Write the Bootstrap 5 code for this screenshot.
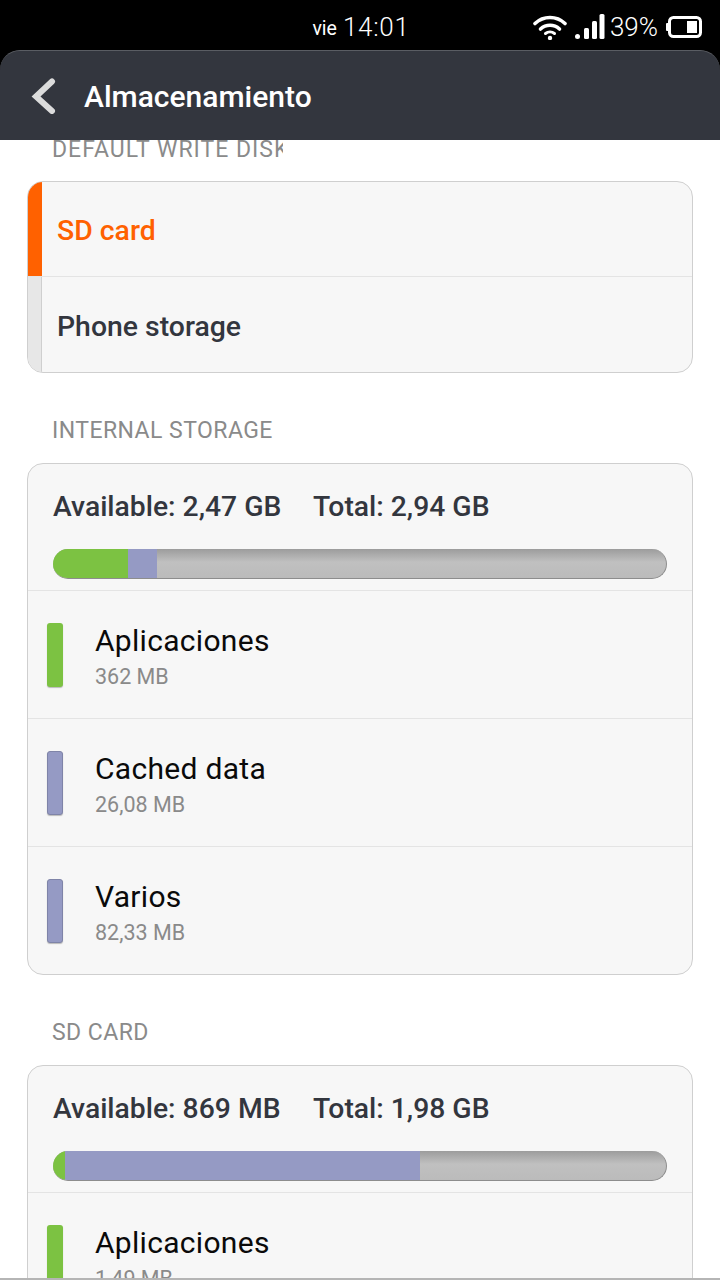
<!DOCTYPE html>
<html>

<head>
    <title>Almacenamiento</title>
    <!-- Bootstrap CSS -->
    <link rel="stylesheet" href="https://cdn.jsdelivr.net/npm/bootstrap@5.3.0/dist/css/bootstrap.min.css">
    <style>
        html, body { margin: 0; height: 1280px; overflow: hidden; background: #000; font-family: Roboto, "Liberation Sans", sans-serif; }
        .phone { width: 720px; height: 1280px; overflow: hidden; }
        .status-bar { height: 50px; padding: 4px 18px 0 0; color: #fff; }
        .status-day { font-size: 19.5px; margin-right: 6px; padding-top: 3px; }
        .status-time { font-size: 26px; font-weight: 300; letter-spacing: .7px; width: 190px; }
        .status-pct { font-size: 26px; font-weight: 300; margin: 0 8px 0 5px; }
        .app-bar { height: 90px; background: #33363e; border-top: 1px solid #5a5d63; border-radius: 20px 20px 0 0; color: #fff; padding-left: 31px; }
        .app-title { font-size: 30px; font-weight: 500; margin-left: 27px; padding-top: 2px; }
        .scroll-area { height: 1140px; background: #fff; overflow: hidden; border-bottom: 2px solid #b5b5b5; }
        .scroll-inner { padding: 0 27px; margin-top: -4px; }
        .sect-label { font-size: 23px; letter-spacing: .45px; line-height: 28px; color: #8a8a8a; padding-left: 25px; margin-bottom: 18px; }
        .sect-label.clipped { width: 256px; overflow: hidden; white-space: nowrap; letter-spacing: 1px; margin-bottom: 17px; }
        .sect-gap { margin-top: 44px; }
        .store-card { background: #f7f7f7; border: 1px solid #cfcfcf; border-radius: 16px; overflow: hidden; }
        .disk-row { height: 95px; border-bottom: 1px solid #e4e4e4; font-size: 28.4px; font-weight: 500; color: #33363e; }
        .disk-row:last-child { border-bottom: 0; }
        .disk-row.active { color: #ff6100; }
        .disk-name { padding-top: 5px; }
        .disk-strip { width: 14px; align-self: stretch; background: #e7e7e7; border-right: 1px solid #cfcfcf; margin-right: 15px; }
        .active .disk-strip { background: #ff6100; border-right: 0; }
        .summary { height: 127px; padding: 26px 25px 0; border-bottom: 1px solid #e4e4e4; }
        .summary-text { font-size: 28.3px; line-height: 34px; font-weight: 500; color: #33363e; margin-bottom: 25px; white-space: nowrap; }
        .summary-avail { width: 260px; }
        .usage-bar { height: 30px; border-radius: 15px; overflow: hidden; background: linear-gradient(#9c9c9c, #c0c0c0 45%, #bbb); border-bottom: 1px solid #8d8d8d; border-right: 1px solid #8d8d8d; }
        .usage-green { background: #7cc242; }
        .usage-purple { background: #959ac4; }
        .legend-row { height: 128px; border-bottom: 1px solid #e4e4e4; padding-left: 19px; }
        .legend-row:last-child { height: 127px; border-bottom: 0; }
        .swatch { width: 16px; height: 64px; border-radius: 3px; margin-right: 32px; box-shadow: 0 1px 1px rgba(0, 0, 0, .25); }
        .swatch-purple { background: #959ac4; border: 1px solid #7f84a8; }
        .legend-text { padding-top: 4px; }
        .legend-name { font-size: 30px; line-height: 40px; color: #0a0a0a; letter-spacing: .3px; }
        .legend-size { font-size: 21.5px; line-height: 32px; color: #8a8a8a; }
    </style>
</head>

<body>
    <div class="phone">
        <div class="status-bar d-flex align-items-center justify-content-end">
            <span class="status-day">vie</span>
            <span class="status-time">14:01</span>
            <svg width="34" height="26" viewBox="0 0 34 26" fill="none" stroke="#fff" stroke-width="3.6" stroke-linecap="round">
                <path d="M2 9.5C10.5 1.5 23.5 1.5 32 9.5" />
                <path d="M7.5 15C13 10 21 10 26.5 15" />
                <path d="M12.5 19.5C15 17.6 19 17.6 21.5 19.5" stroke-width="3" />
                <circle cx="17" cy="24" r="2.2" fill="#fff" stroke="none" />
            </svg>
            <svg class="ms-2" width="30" height="26" viewBox="0 0 30 26" fill="#fff">
                <circle cx="2.5" cy="22.5" r="2.5" />
                <rect x="9" y="14" width="5" height="11" rx="1.5" />
                <rect x="17" y="7" width="5" height="18" rx="1.5" />
                <rect x="24.5" y="0" width="5" height="25" rx="1.5" />
            </svg>
            <span class="status-pct">39%</span>
            <svg width="36" height="22" viewBox="0 0 36 22">
                <rect x="0" y="7" width="3" height="8" rx="1" fill="#fff" />
                <rect x="3.5" y="1.5" width="31" height="19" rx="4" fill="none" stroke="#fff" stroke-width="3" />
                <rect x="21" y="5" width="10" height="12" fill="#fff" />
            </svg>
        </div>

        <div class="app-bar d-flex align-items-center">
            <svg width="26" height="36" viewBox="0 0 26 36" fill="none" stroke="#dcdcdc" stroke-width="6" stroke-linecap="round" stroke-linejoin="miter">
                <path d="M21 3.5L5 18.5L21 33" />
            </svg>
            <span class="app-title">Almacenamiento</span>
        </div>

        <div class="scroll-area">
            <div class="scroll-inner">
                <div class="sect-label clipped">DEFAULT WRITE DISK</div>
                <div class="store-card">
                    <div class="disk-row active d-flex align-items-center"><span class="disk-strip"></span><span class="disk-name">SD card</span></div>
                    <div class="disk-row d-flex align-items-center"><span class="disk-strip"></span><span class="disk-name">Phone storage</span></div>
                </div>

                <div class="sect-label sect-gap">INTERNAL STORAGE</div>
                <div class="store-card">
                    <div class="summary">
                        <div class="summary-text d-flex"><span class="summary-avail">Available: 2,47 GB</span><span>Total: 2,94 GB</span></div>
                        <div class="usage-bar d-flex">
                            <div class="usage-green" style="width: 75px"></div>
                            <div class="usage-purple" style="width: 29px"></div>
                        </div>
                    </div>
                    <div class="legend-row d-flex align-items-center">
                        <div class="swatch usage-green"></div>
                        <div class="legend-text"><div class="legend-name">Aplicaciones</div><div class="legend-size">362 MB</div></div>
                    </div>
                    <div class="legend-row d-flex align-items-center">
                        <div class="swatch swatch-purple"></div>
                        <div class="legend-text"><div class="legend-name">Cached data</div><div class="legend-size">26,08 MB</div></div>
                    </div>
                    <div class="legend-row d-flex align-items-center">
                        <div class="swatch swatch-purple"></div>
                        <div class="legend-text"><div class="legend-name">Varios</div><div class="legend-size">82,33 MB</div></div>
                    </div>
                </div>

                <div class="sect-label sect-gap">SD CARD</div>
                <div class="store-card">
                    <div class="summary">
                        <div class="summary-text d-flex"><span class="summary-avail">Available: 869 MB</span><span>Total: 1,98 GB</span></div>
                        <div class="usage-bar d-flex">
                            <div class="usage-green" style="width: 12px"></div>
                            <div class="usage-purple" style="width: 355px"></div>
                        </div>
                    </div>
                    <div class="legend-row d-flex align-items-center">
                        <div class="swatch usage-green"></div>
                        <div class="legend-text"><div class="legend-name">Aplicaciones</div><div class="legend-size">1,49 MB</div></div>
                    </div>
                </div>
            </div>
        </div>
    </div>

    <!-- Bootstrap JS -->
    <script src="https://cdn.jsdelivr.net/npm/bootstrap@5.3.0/dist/js/bootstrap.bundle.min.js"></script>
</body>

</html>
